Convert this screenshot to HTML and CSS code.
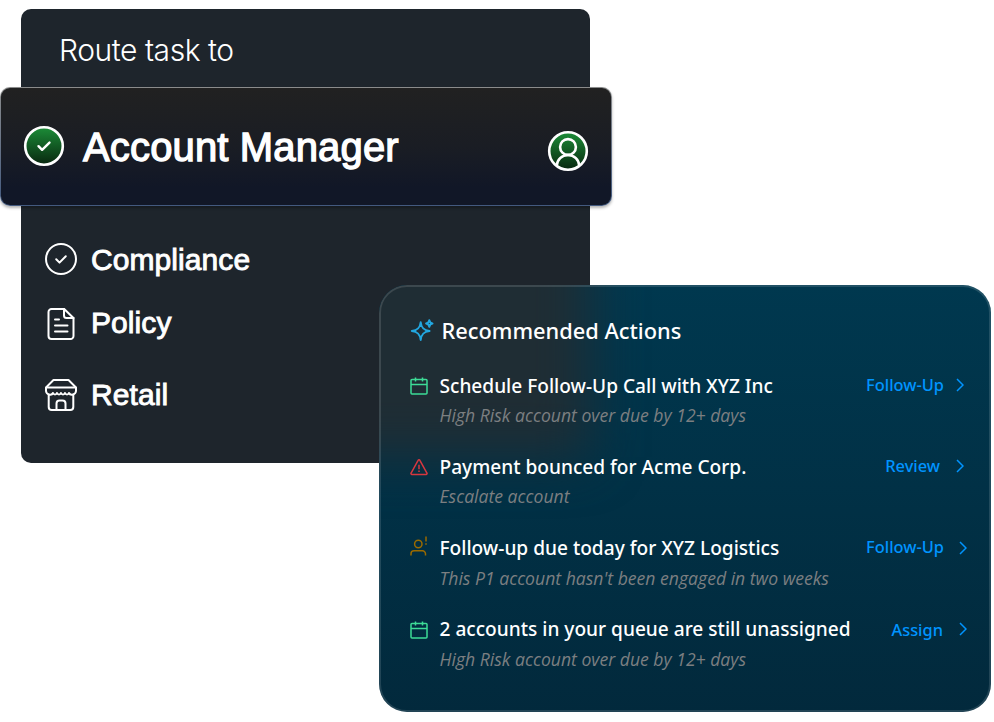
FILE: index.html
```
<!DOCTYPE html>
<html>
  <head>
    <meta charset="utf-8" />
    <title>Route task</title>

    <link rel="stylesheet" href="styles.css">
  </head>

  <body>
    <div class="route-frame">
      <h2 class="route-title">Route task to</h2>

      <div class="selected-frame">
        <svg class="selected-check" viewBox="0 0 42 42">
          <defs>
            <linearGradient id="green" x1="0" y1="0" x2="0" y2="1">
              <stop offset="0" stop-color="#1c8d38" />
              <stop offset="1" stop-color="#08270f" />
            </linearGradient>
          </defs>
          <circle cx="21" cy="21" r="18.8" fill="url(#green)" stroke="#fff" stroke-width="2.6" />
          <path d="M15.500 21.200l3.600 3.600 7.400-7.200" fill="none" stroke="#fff" stroke-width="2.400" stroke-linecap="round" stroke-linejoin="round" />
        </svg>
        <p class="selected-name">Account Manager</p>
        <svg class="selected-user" viewBox="0 0 42 42">
          <circle cx="21" cy="21" r="18.8" fill="url(#green)" stroke="#fff" stroke-width="2.6" />
          <g fill="none" stroke="#fff" stroke-width="2.6">
            <circle cx="21" cy="17" r="7.9" />
            <path d="M9.7 36c.4-6.300 5-11 11.300-11s10.900 4.700 11.300 11" />
          </g>
        </svg>
      </div>

      <ul class="route-list">
        <li class="route-item compliance">
          <svg viewBox="0 0 34 34">
            <circle cx="17" cy="17" r="15" />
            <path d="M12.200 17.300l3.300 3.300 6.300-6.400" />
          </svg>
          <p>Compliance</p>
        </li>
        <li class="route-item policy">
          <svg viewBox="0 0 34 34">
            <path d="M7.500 2h12.700l9.300 9v18a3 3 0 0 1-3 3H7.500a3 3 0 0 1-3-3V5a3 3 0 0 1 3-3z" />
            <path d="M20 2v6.500a2.500 2.500 0 0 0 2.500 2.500h7" />
            <path d="M11 12.500h4M11 18.500h12.500M11 24.500h12.500" />
          </svg>
          <p>Policy</p>
        </li>
        <li class="route-item retail">
          <svg viewBox="0 0 34 34">
            <path d="M9.500 2h15l7.500 7.500V13a4 4 0 0 1-3 3.500c-2 .5-3.500-.3-4-1.500-.8 2-3.200 2-4 0-.8 2-3.200 2-4 0-.8 2-3.200 2-4 0-.8 2-3.200 2-4 0-.5 1.200-2 2-4 1.500A4 4 0 0 1 2 13V9.500z" />
            <path d="M2.500 9.500h29" />
            <path d="M4.700 17v12a3 3 0 0 0 3 3h18.600a3 3 0 0 0 3-3V17" />
            <path d="M12.500 32v-6.500a3 3 0 0 1 3-3h3a3 3 0 0 1 3 3V32" />
          </svg>
          <p>Retail</p>
        </li>
      </ul>
    </div>

    <div class="actions-frame">
      <div class="actions-head">
        <svg class="spark-icon" viewBox="0 0 24 24">
          <path d="M10.700 3.300c.7 5.500 3 7.900 8.800 8.700-5.800.8-8.100 3.200-8.800 8.900-.7-5.700-3-8.100-8.900-8.900 5.900-.8 8.200-3.200 8.900-8.700z" />
          <path d="M19.300 1.200c.3 2 1 2.900 3.200 3.300-2.200.4-2.900 1.200-3.200 3.300-.3-2.100-1-2.900-3.200-3.300 2.200-.4 2.900-1.300 3.200-3.300z" />
        </svg>
        <h3>Recommended Actions</h3>
      </div>

      <ul class="actions-list">
        <li class="action-item">
          <svg class="action-icon green" viewBox="0 0 18 18">
            <path d="M1 3.500a1 1 0 0 1 1-1h14a1 1 0 0 1 1 1V16a1 1 0 0 1-1 1H2a1 1 0 0 1-1-1zM1 7.500h16M5.500.5v4M12.500.5v4" />
          </svg>
          <div class="action-text">
            <p class="action-title">Schedule Follow-Up Call with XYZ Inc</p>
            <p class="action-desc">High Risk account over due by 12+ days</p>
          </div>
          <a class="action-link">Follow-Up</a>
          <svg class="arrow" viewBox="0 0 8 14"><path d="M1 1l6 6-6 6" /></svg>
        </li>
        <li class="action-item">
          <svg class="action-icon red" viewBox="0 0 18 18">
            <path d="M8.100 2.400a1 1 0 0 1 1.800 0l7 12.600a.9.900 0 0 1-.8 1.400H1.900a.9.900 0 0 1-.8-1.400zM9 6.700v4.500M9 12.600v1.300" />
          </svg>
          <div class="action-text">
            <p class="action-title">Payment bounced for Acme Corp.</p>
            <p class="action-desc">Escalate account</p>
          </div>
          <a class="action-link review">Review</a>
          <svg class="arrow" viewBox="0 0 8 14"><path d="M1 1l6 6-6 6" /></svg>
        </li>
        <li class="action-item">
          <svg class="action-icon amber" viewBox="0 0 18 20">
            <circle cx="8.300" cy="8" r="3.700" />
            <path d="M1 19.500v-1.700a3 3 0 0 1 3-3h8.500a3 3 0 0 1 3 3v1.700M16 .5v5M16 7.300v1.500" />
          </svg>
          <div class="action-text">
            <p class="action-title">Follow-up due today for XYZ Logistics</p>
            <p class="action-desc">This P1 account hasn't been engaged in two weeks</p>
          </div>
          <a class="action-link far">Follow-Up</a>
          <svg class="arrow far" viewBox="0 0 8 14"><path d="M1 1l6 6-6 6" /></svg>
        </li>
        <li class="action-item">
          <svg class="action-icon green" viewBox="0 0 18 18">
            <path d="M1 3.500a1 1 0 0 1 1-1h14a1 1 0 0 1 1 1V16a1 1 0 0 1-1 1H2a1 1 0 0 1-1-1zM1 7.500h16M5.500.5v4M12.500.5v4" />
          </svg>
          <div class="action-text">
            <p class="action-title">2 accounts in your queue are still unassigned</p>
            <p class="action-desc">High Risk account over due by 12+ days</p>
          </div>
          <a class="action-link assign">Assign</a>
          <svg class="arrow far" viewBox="0 0 8 14"><path d="M1 1l6 6-6 6" /></svg>
        </li>
      </ul>
    </div>
  </body>
</html>
```
FILE: styles.css
```
* {
  margin: 0;
  padding: 0;
  box-sizing: border-box;
}
body {
  position: relative;
  width: 994px;
  height: 722px;
  overflow: hidden;
  background: #fff;
  color: #fff;
  white-space: nowrap;
}
ul li {
  list-style: none;
}
svg {
  display: block;
  flex-shrink: 0;
}
.route-frame {
  width: 569px;
  height: 454px;
  margin: 8.500px 0 0 21px;
  border-radius: 10px;
  background: #1e252c;
  display: flow-root;
  font-family: "Liberation Sans", sans-serif;
}
.route-title {
  height: 78.500px;
  padding: 20px 0 0 38px;
  font-family: Inter, "Liberation Sans", sans-serif;
  font-size: 30px;
  line-height: 42px;
  font-weight: 300;
  letter-spacing: -0.450px;
}
.selected-frame {
  width: 612px;
  height: 119px;
  margin-left: -21px;
  padding: 0 22px 0 22px;
  border: 1px solid transparent;
  border-radius: 10px;
  background: linear-gradient(#212121, #1a1d24 50%, #111727 85%) padding-box, linear-gradient(#8b8c8c, #42597f) border-box;
  box-shadow: 0 2px 3px rgba(0, 0, 0, 0.3);
  display: flex;
  align-items: center;
}
.selected-check,
.selected-user {
  width: 42px;
  height: 42px;
}
.selected-check {
  margin-top: -1px;
}
.selected-user {
  margin: 8px 0 0 auto;
}
.selected-name {
  margin: 2px 0 0 18px;
  font-size: 40px;
  -webkit-text-stroke: 1.300px #fff;
  letter-spacing: 0.150px;
}
.route-list {
  padding: 36px 0 0 23px;
}
.route-item {
  display: flex;
  align-items: center;
  height: 34px;
  font-size: 30px;
  -webkit-text-stroke: 0.900px #fff;
  letter-spacing: 0.080px;
}
.route-item p {
  padding-top: 1px;
}
.route-item svg {
  width: 34px;
  height: 34px;
  margin-right: 13px;
  fill: none;
  stroke: #fff;
  stroke-width: 2;
  stroke-linecap: round;
  stroke-linejoin: round;
}
.policy {
  margin-top: 31px;
}
.policy p {
  padding: 0 0 3px;
}
.retail {
  margin-top: 37px;
}
.retail p {
  padding: 0 0 1px;
}
.actions-frame {
  position: absolute;
  left: 379px;
  top: 285px;
  width: 612px;
  height: 427px;
  border-radius: 28px;
  overflow: hidden;
  background: linear-gradient(#00384f, #02293c);
  padding: 31px 24px 0 30px;
  font-family: "Noto Sans", "Open Sans", sans-serif;
}
.actions-frame::before {
  content: "";
  position: absolute;
  left: -60px;
  top: -60px;
  width: 271px;
  height: 232px;
  background: #1f2d34;
  filter: blur(26px);
}
.actions-frame::after {
  content: "";
  position: absolute;
  inset: 0;
  border: 2px solid rgba(255, 255, 255, 0.13);
  border-radius: 28px;
}
.actions-head,
.actions-list {
  position: relative;
}
.actions-head {
  display: flex;
  align-items: center;
  height: 30px;
}
.actions-head h3 {
  margin: -2px 0 0 8px;
  font-size: 21.800px;
  font-weight: 500;
}
.spark-icon {
  width: 24px;
  height: 24px;
  margin-left: 0.500px;
  fill: none;
  stroke: #22a7e0;
  stroke-width: 2;
  stroke-linejoin: round;
}
.actions-list {
  margin-top: 25px;
}
.action-item {
  display: flex;
  height: 81.300px;
}
.action-icon {
  width: 18px;
  height: 18px;
  margin: 6px 12px 0 0.500px;
  fill: none;
  stroke-width: 1.500;
}
.action-icon.green {
  stroke: #3ddc97;
}
.action-icon.red {
  stroke: #d7373f;
}
.action-icon.amber {
  height: 20px;
  margin-top: 2px;
  stroke: #9a6a00;
}
.action-title {
  padding-top: 1.500px;
  font-size: 19.100px;
  line-height: 27px;
  font-weight: 500;
}
.action-desc {
  margin-top: 2.500px;
  font-family: "Open Sans", "Noto Sans", sans-serif;
  font-size: 17.600px;
  line-height: 26px;
  font-style: italic;
  color: #7c7f81;
}
.action-link {
  margin: 1px 12px 0 auto;
  font-size: 16.400px;
  line-height: 25px;
  font-weight: 500;
  color: #0094ff;
}
.action-link.review {
  margin-right: 16px;
}
.action-link.far {
  margin: 0 15px 0 auto;
}
.action-link.assign {
  margin: 2px 16px 0 auto;
}
.arrow {
  width: 8px;
  height: 14px;
  margin: 7px 3px 0 0;
  fill: none;
  stroke: #0094ff;
  stroke-width: 1.500;
}
.arrow.far {
  margin-right: 0;
}
```
